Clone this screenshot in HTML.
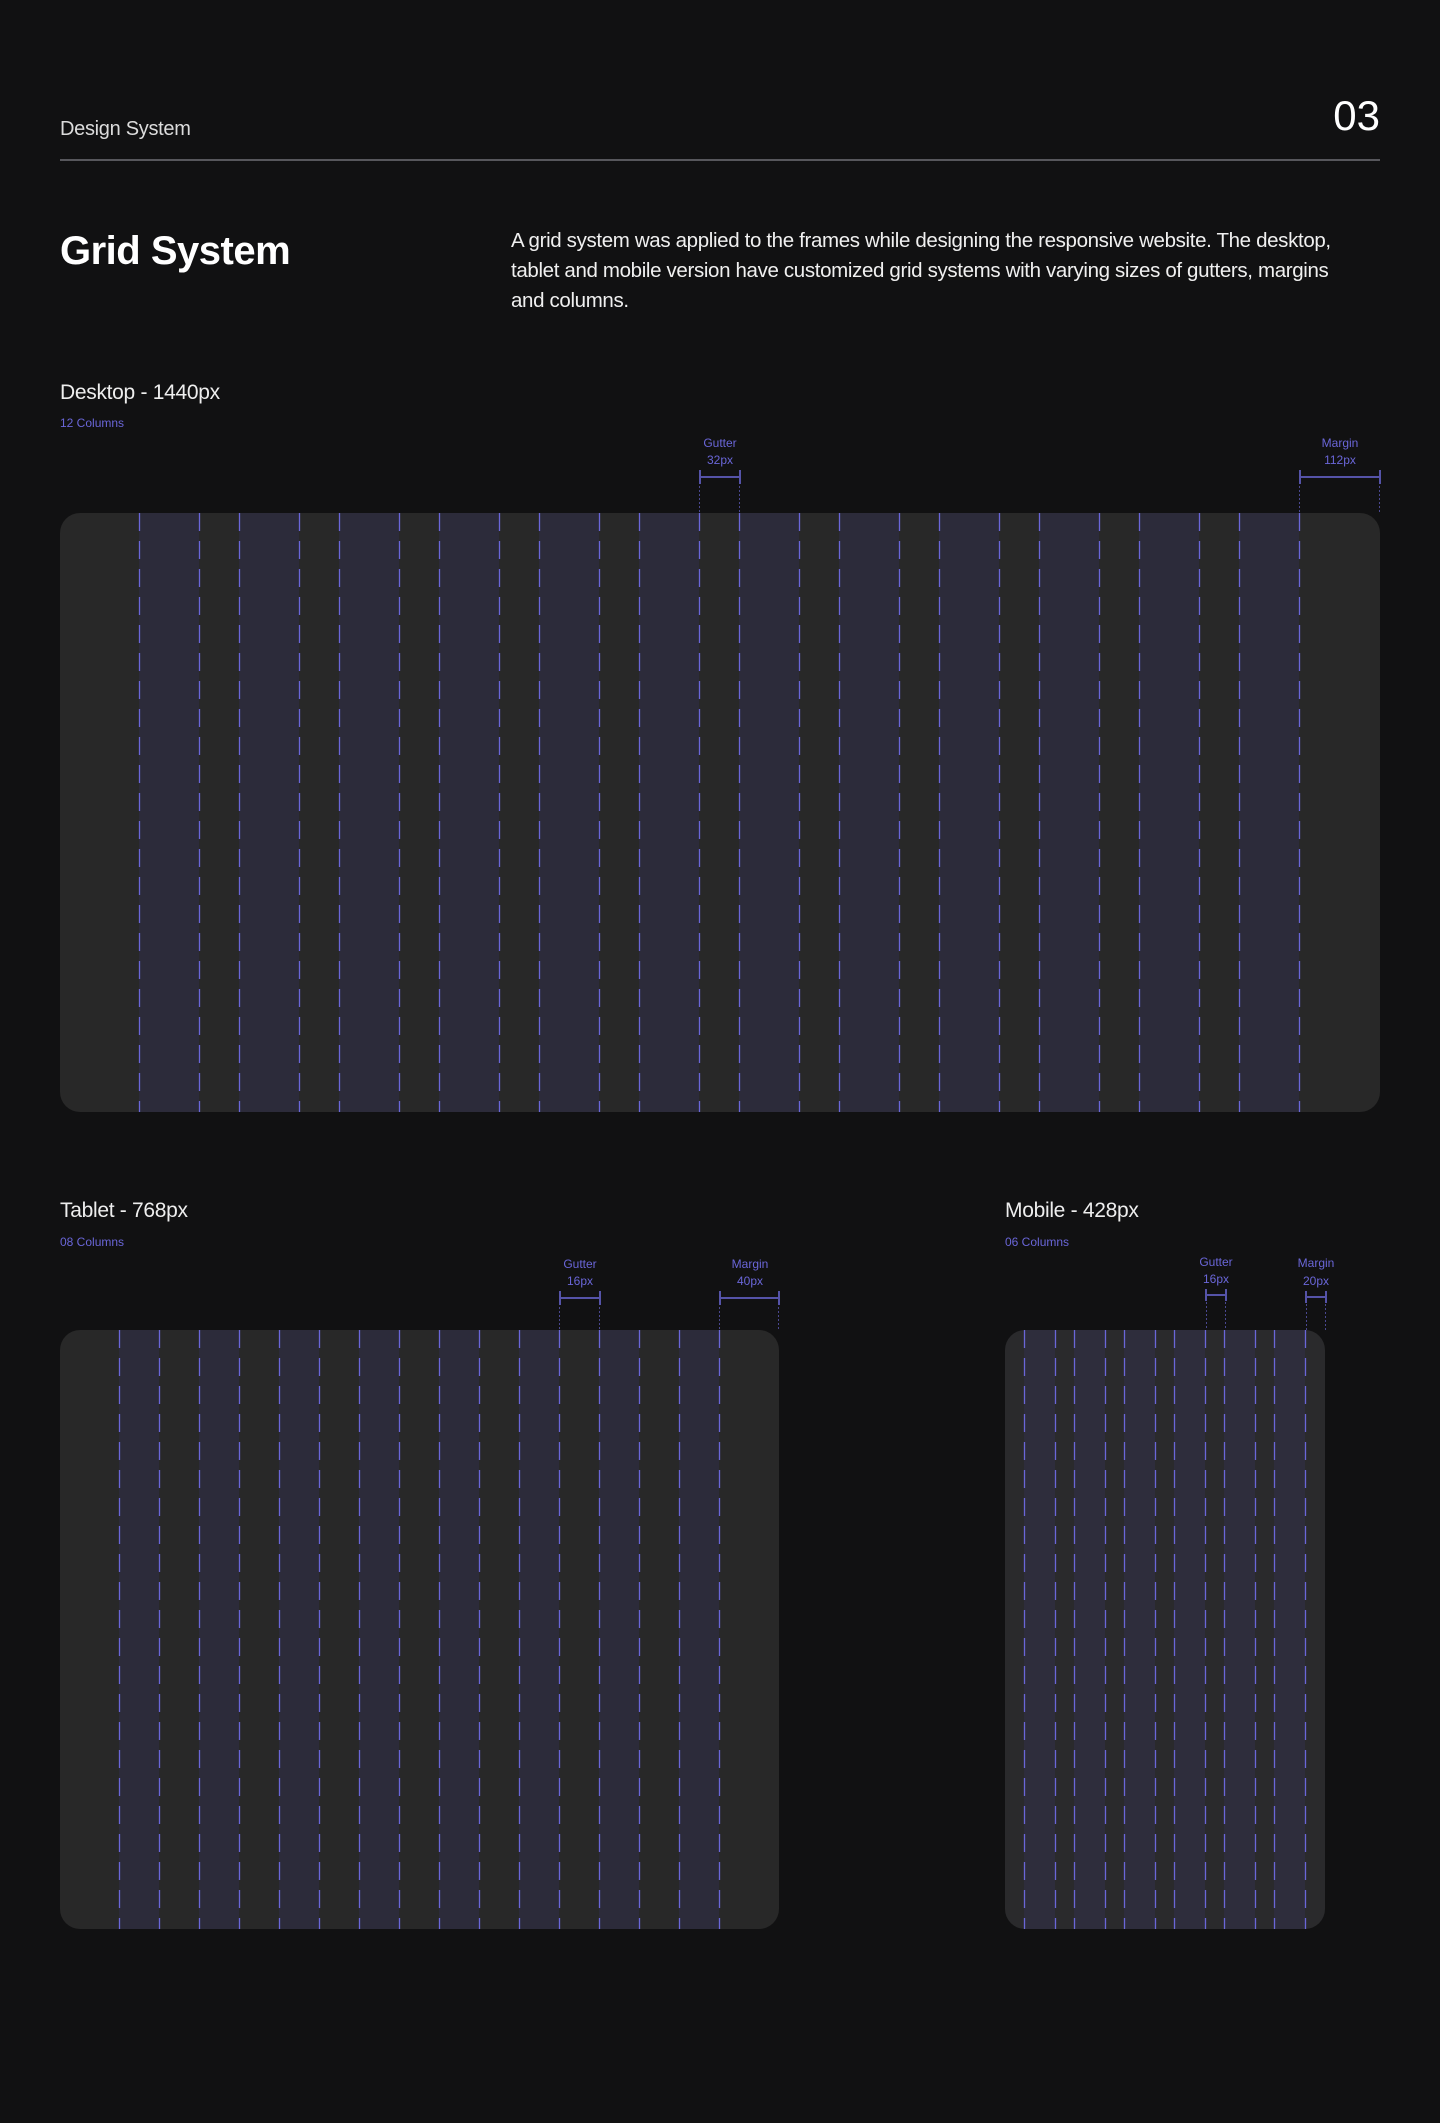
<!DOCTYPE html>
<html><head><meta charset="utf-8"><style>
html,body{margin:0;padding:0;background:#111112;}
body{width:1440px;height:2123px;position:relative;overflow:hidden;font-family:"Liberation Sans",sans-serif;color:#fff;}
.t{position:absolute;white-space:nowrap;}
svg{position:absolute;left:0;top:0;}
.lbl{font-family:"Liberation Sans",sans-serif;font-size:12px;fill:#6a66d8;text-anchor:middle;}
</style></head><body>
<svg width="1440" height="2123" viewBox="0 0 1440 2123">
<rect x="60" y="159" width="1320" height="2" fill="#57575c"/>
<!-- Desktop -->
<g transform="translate(60,513)">
<rect width="1320" height="599" rx="20" fill="#282828"/>
<g fill="#2c2b3a">
<rect x="79" width="60" height="599"/><rect x="179" width="60" height="599"/><rect x="279" width="60" height="599"/><rect x="379" width="60" height="599"/><rect x="479" width="60" height="599"/><rect x="579" width="60" height="599"/><rect x="679" width="60" height="599"/><rect x="779" width="60" height="599"/><rect x="879" width="60" height="599"/><rect x="979" width="60" height="599"/><rect x="1079" width="60" height="599"/><rect x="1179" width="60" height="599"/>
</g>
<g stroke="#6a66d8" stroke-width="1.3" stroke-dasharray="18 10">
<path d="M79.5 0V599M139.5 0V599M179.5 0V599M239.5 0V599M279.5 0V599M339.5 0V599M379.5 0V599M439.5 0V599M479.5 0V599M539.5 0V599M579.5 0V599M639.5 0V599M679.5 0V599M739.5 0V599M779.5 0V599M839.5 0V599M879.5 0V599M939.5 0V599M979.5 0V599M1039.5 0V599M1079.5 0V599M1139.5 0V599M1179.5 0V599M1239.5 0V599"/>
</g>
</g>
<g stroke="#4a4890" stroke-width="1" stroke-dasharray="2 2"><path d="M699.5 478V513M739.5 478V513M1299.5 478V513M1379.5 478V513"/></g>
<g stroke="#5553a8" stroke-width="2" fill="none"><path d="M700 477H740M700 470V484M740 470V484M1300 477H1380M1300 470V484M1380 470V484"/></g>
<text class="lbl" x="720" y="447">Gutter</text><text class="lbl" x="720" y="464">32px</text>
<text class="lbl" x="1340" y="447">Margin</text><text class="lbl" x="1340" y="464">112px</text>
<!-- Tablet -->
<g transform="translate(60,1330)">
<rect width="719" height="599" rx="20" fill="#282828"/>
<g fill="#2c2b3a">
<rect x="59" width="40" height="599"/><rect x="139" width="40" height="599"/><rect x="219" width="40" height="599"/><rect x="299" width="40" height="599"/><rect x="379" width="40" height="599"/><rect x="459" width="40" height="599"/><rect x="539" width="40" height="599"/><rect x="619" width="40" height="599"/>
</g>
<g stroke="#6a66d8" stroke-width="1.3" stroke-dasharray="18 10">
<path d="M59.5 0V599M99.5 0V599M139.5 0V599M179.5 0V599M219.5 0V599M259.5 0V599M299.5 0V599M339.5 0V599M379.5 0V599M419.5 0V599M459.5 0V599M499.5 0V599M539.5 0V599M579.5 0V599M619.5 0V599M659.5 0V599"/>
</g>
</g>
<g stroke="#4a4890" stroke-width="1" stroke-dasharray="2 2"><path d="M559.5 1299V1330M599.5 1299V1330M719.5 1299V1330M778.5 1299V1330"/></g>
<g stroke="#5553a8" stroke-width="2" fill="none"><path d="M560 1298H600M560 1291V1305M600 1291V1305M720 1298H779M720 1291V1305M779 1291V1305"/></g>
<text class="lbl" x="580" y="1268">Gutter</text><text class="lbl" x="580" y="1285">16px</text>
<text class="lbl" x="750" y="1268">Margin</text><text class="lbl" x="750" y="1285">40px</text>
<!-- Mobile -->
<g transform="translate(1005,1330)">
<rect width="320" height="599" rx="20" fill="#2a2a2c"/>
<g fill="#2e2d3c">
<rect x="19" width="31" height="599"/><rect x="69" width="31" height="599"/><rect x="119" width="31" height="599"/><rect x="169" width="31" height="599"/><rect x="219" width="31" height="599"/><rect x="269" width="31" height="599"/>
</g>
<g stroke="#6a66d8" stroke-width="1.3" stroke-dasharray="18 10">
<path d="M19.5 0V599M50.5 0V599M69.5 0V599M100.5 0V599M119.5 0V599M150.5 0V599M169.5 0V599M200.5 0V599M219.5 0V599M250.5 0V599M269.5 0V599M300.5 0V599"/>
</g>
</g>
<g stroke="#4a4890" stroke-width="1" stroke-dasharray="2 2"><path d="M1206.5 1298V1330M1225.5 1298V1330M1306.5 1300V1330M1325.5 1300V1330"/></g>
<g stroke="#5553a8" stroke-width="2" fill="none"><path d="M1206 1295H1226M1206 1289V1301M1226 1289V1301M1306 1297H1326M1306 1291V1303M1326 1291V1303"/></g>
<text class="lbl" x="1216" y="1266">Gutter</text><text class="lbl" x="1216" y="1283">16px</text>
<text class="lbl" x="1316" y="1267">Margin</text><text class="lbl" x="1316" y="1285">20px</text>
</svg>
<div class="t" style="left:60px;top:118px;font-size:20px;color:#dcdcdc;letter-spacing:-0.3px;">Design System</div>
<div class="t" style="right:60px;top:92px;font-size:42px;color:#fff;">03</div>
<div class="t" style="left:60px;top:229px;font-size:40px;font-weight:bold;letter-spacing:-0.5px;">Grid System</div>
<div class="t" style="left:511px;top:226px;font-size:20.5px;line-height:30px;color:#f0f0f0;letter-spacing:-0.35px;">A grid system was applied to the frames while designing the responsive website. The desktop,<br>tablet and mobile version have customized grid systems with varying sizes of gutters, margins<br>and columns.</div>
<div class="t" style="left:60px;top:381px;font-size:21px;color:#eee;letter-spacing:-0.3px;">Desktop - 1440px</div>
<div class="t" style="left:60px;top:416px;font-size:12px;color:#6a66d8;">12 Columns</div>
<div class="t" style="left:60px;top:1199px;font-size:21px;color:#eee;letter-spacing:-0.3px;">Tablet - 768px</div>
<div class="t" style="left:60px;top:1235px;font-size:12px;color:#6a66d8;">08 Columns</div>
<div class="t" style="left:1005px;top:1199px;font-size:21px;color:#eee;letter-spacing:-0.3px;">Mobile - 428px</div>
<div class="t" style="left:1005px;top:1235px;font-size:12px;color:#6a66d8;">06 Columns</div>
</body></html>
